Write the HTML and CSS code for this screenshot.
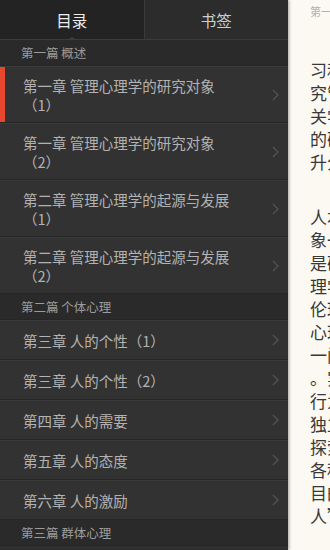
FILE: index.html
```html
<!DOCTYPE html>
<html lang="zh">
<head>
<meta charset="utf-8">
<title>目录</title>
<link rel="stylesheet" href="styles.css">
</head>
<body>
<div class="app">
  <aside class="sidebar">
    <div class="tabs">
      <div class="tab active">目录<span class="notch"></span></div>
      <div class="tab">书签</div>
    </div>
    <div class="toc">
      <div class="part">第一篇 概述</div>
      <div class="item tall current"><span class="title">第一章 管理心理学的研究对象<br>（1）</span><svg class="chev" viewBox="0 0 7 12"><polyline points="1,1 6,6 1,11"/></svg></div>
      <div class="item tall"><span class="title">第一章 管理心理学的研究对象<br>（2）</span><svg class="chev" viewBox="0 0 7 12"><polyline points="1,1 6,6 1,11"/></svg></div>
      <div class="item tall"><span class="title">第二章 管理心理学的起源与发展<br>（1）</span><svg class="chev" viewBox="0 0 7 12"><polyline points="1,1 6,6 1,11"/></svg></div>
      <div class="item tall"><span class="title">第二章 管理心理学的起源与发展<br>（2）</span><svg class="chev" viewBox="0 0 7 12"><polyline points="1,1 6,6 1,11"/></svg></div>
      <div class="part">第二篇 个体心理</div>
      <div class="item"><span class="title">第三章 人的个性（1）</span><svg class="chev" viewBox="0 0 7 12"><polyline points="1,1 6,6 1,11"/></svg></div>
      <div class="item"><span class="title">第三章 人的个性（2）</span><svg class="chev" viewBox="0 0 7 12"><polyline points="1,1 6,6 1,11"/></svg></div>
      <div class="item"><span class="title">第四章 人的需要</span><svg class="chev" viewBox="0 0 7 12"><polyline points="1,1 6,6 1,11"/></svg></div>
      <div class="item"><span class="title">第五章 人的态度</span><svg class="chev" viewBox="0 0 7 12"><polyline points="1,1 6,6 1,11"/></svg></div>
      <div class="item"><span class="title">第六章 人的激励</span><svg class="chev" viewBox="0 0 7 12"><polyline points="1,1 6,6 1,11"/></svg></div>
      <div class="part">第三篇 群体心理</div>
    </div>
  </aside>
  <main class="reader">
    <div class="running">第一篇 概述</div>
    <div class="para first">
      <div class="line">习和研究管理心理学的意义</div>
      <div class="line">究管理活动中人的心理</div>
      <div class="line">关学科的知识，探讨</div>
      <div class="line">的研究方法，以提</div>
      <div class="line">升分析问题的能力</div>
    </div>
    <div class="para">
      <div class="line">人本管理的研究对</div>
      <div class="line">象一般来说，管理</div>
      <div class="line">是研究管理中的心</div>
      <div class="line">理学的一个分支</div>
      <div class="line">伦理学、社会学</div>
      <div class="line">心理学等学科</div>
      <div class="line">一门综合性的学科</div>
      <div class="line">。实践表明，人的</div>
      <div class="line">行为并不是孤立</div>
      <div class="line">独立存在的，需要</div>
      <div class="line">探索其规律，运用</div>
      <div class="line">各种方法，以达到</div>
      <div class="line">目的，即“以人为</div>
      <div class="line">人”的管理理念</div>
    </div>
  </main>
</div>
</body>
</html>
```

FILE: styles.css
```css
* { box-sizing: border-box; }
html, body { margin: 0; padding: 0; }
body {
  width: 330px;
  height: 550px;
  overflow: hidden;
  font-family: "Noto Sans CJK SC", "Noto Sans", sans-serif;
  background: #fcf9f3;
}
.app {
  display: flex;
  height: 550px;
}
.sidebar {
  width: 288px;
  flex: none;
  background: #2f2f2f;
  display: flex;
  flex-direction: column;
  box-shadow: 1px 0 3px rgba(0,0,0,0.35);
  position: relative;
  z-index: 1;
}
.tabs {
  display: flex;
  height: 40px;
  border-bottom: 1px solid #3c3c3c;
  background: #252525;
}
.tab {
  flex: 1;
  display: flex;
  align-items: center;
  justify-content: center;
  font-size: 15.5px;
  color: #cfcfcf;
  background: #2c2c2c;
  border-left: 1px solid #3a3a3a;
  position: relative;
}
.tab.active {
  background: #232323;
  color: #ededed;
  border-left: none;
}
.notch {
  position: absolute;
  left: 50%;
  bottom: -1px;
  margin-left: -5px;
  width: 0;
  height: 0;
  border-left: 5px solid transparent;
  border-right: 5px solid transparent;
  border-bottom: 3px solid #3c3c3c;
}
.toc {
  display: flex;
  flex-direction: column;
}
.part {
  height: 26px;
  padding-left: 21px;
  display: flex;
  align-items: center;
  font-size: 12.5px;
  color: #9c9c9c;
  background: #2a2a2a;
  border-bottom: 1px solid #262626;
}
.item {
  height: 40px;
  display: flex;
  align-items: center;
  justify-content: space-between;
  padding: 0 9px 0 23px;
  background: #323232;
  border-top: 1px solid #3a3a3a;
  border-bottom: 1px solid #272727;
  position: relative;
}
.item.tall { height: 57px; }
.title {
  font-size: 14.5px;
  line-height: 19px;
  color: #b2b2b2;
  white-space: nowrap;
}
.item.current::before {
  content: "";
  position: absolute;
  left: 0;
  top: 0;
  bottom: 0;
  width: 5px;
  background: #e7472f;
}
.chev {
  width: 7px;
  height: 12px;
  fill: none;
  stroke: #575757;
  stroke-width: 1.1;
}
.reader {
  flex: 1;
  overflow: hidden;
  padding: 3px 0 0 22px;
  color: #383838;
}
.running {
  font-size: 11px;
  color: #b2b2b2;
  white-space: nowrap;
  height: 55px;
}
.para { margin-bottom: 32px; }
.line {
  font-size: 17px;
  line-height: 23px;
  white-space: nowrap;
}
```
